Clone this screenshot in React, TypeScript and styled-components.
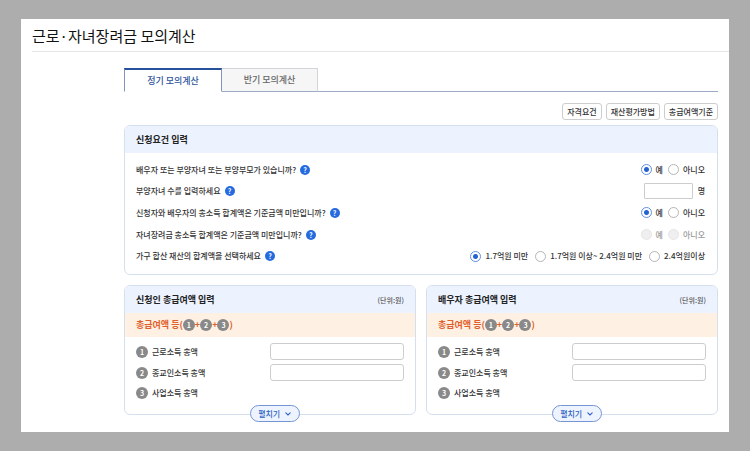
import React, { useState } from 'react';
import styled, { createGlobalStyle } from 'styled-components';

const GlobalStyle = createGlobalStyle`
  *, *::before, *::after { box-sizing: border-box; }
  body {
    margin: 0;
    background: #adadad;
    color: #333;
    font: 500 8px/12px "Noto Sans CJK KR", sans-serif;
  }
  button, input { font: inherit; color: inherit; margin: 0; padding: 0; }
  h1, h2, h3, p { margin: 0; }
`;

const Page = styled.div`
  padding: 19px 21px;
`;

const Sheet = styled.main`
  background: #fff;
  padding-bottom: 17px;
`;

const Title = styled.h1`
  margin-left: 11px;
  padding: 5px 0 4px;
  border-bottom: 1px solid #e6e6e6;
  color: #111;
  font-size: 15px;
  font-weight: 400;
  line-height: 23px;
`;

const Content = styled.div`
  padding: 16px 11px 0 103px;
`;

const TabList = styled.div`
  display: flex;
  border-bottom: 1px solid #9fabc2;
`;

const Tab = styled.button<{ $active: boolean }>`
  height: 24px;
  width: ${(p) => (p.$active ? 98 : 96)}px;
  margin-bottom: -1px;
  border: 1px solid ${(p) => (p.$active ? '#8195c0' : '#d2d4d8')};
  border-top: ${(p) => (p.$active ? '2px solid #27509b' : '1px solid #d2d4d8')};
  border-bottom-color: ${(p) => (p.$active ? '#fff' : '#9fabc2')};
  border-left-width: ${(p) => (p.$active ? 1 : 0)}px;
  background: ${(p) => (p.$active ? '#fff' : '#f6f6f6')};
  color: ${(p) => (p.$active ? '#2f559c' : '#666')};
  font-size: 9px;
`;

const Actions = styled.div`
  display: flex;
  justify-content: flex-end;
  gap: 4px;
  margin: 11px 0 5px;
`;

const ActionButton = styled.button`
  height: 17px;
  padding: 0 4px;
  border: 1px solid #cdcdcd;
  border-radius: 3px;
  background: #fff;
  line-height: 15px;
`;

const Card = styled.section`
  position: relative;
  border: 1px solid #d5e0ee;
  border-radius: 6px;
  background: #fff;
`;

const CardHeader = styled.header`
  display: flex;
  align-items: center;
  justify-content: space-between;
  height: 27px;
  padding: 0 11px;
  border-radius: 5px 5px 0 0;
  background: #ecf2fe;
`;

const CardTitle = styled.h2`
  color: #222;
  font-size: 9px;
  font-weight: 700;
`;

const Unit = styled.span`
  color: #555;
  font-size: 7px;
`;

const Questions = styled.div`
  display: grid;
  grid-auto-rows: 1fr;
  min-height: 121px;
  padding: 6px 12px 7px 11px;
`;

const QuestionRow = styled.div`
  display: flex;
  align-items: center;
  justify-content: space-between;
`;

const Question = styled.div`
  display: flex;
  align-items: center;
  gap: 4px;
`;

const HelpButton = styled.button`
  width: 10px;
  height: 10px;
  border: 0;
  border-radius: 50%;
  background: #256be0;
  color: #fff;
  font-size: 7px;
  font-weight: 700;
  line-height: 10px;
`;

const Options = styled.div<{ $wide?: boolean }>`
  display: flex;
  align-items: center;
  gap: ${(p) => (p.$wide ? 7 : 5)}px;
`;

const Option = styled.label<{ $disabled?: boolean }>`
  display: flex;
  align-items: center;
  gap: 4px;
  color: ${(p) => (p.$disabled ? '#999' : '#333')};
`;

const Radio = styled.input`
  appearance: none;
  width: 11px;
  height: 11px;
  border: 1px solid #b5b5b5;
  border-radius: 50%;
  background: #fff;

  &:checked {
    border-color: #5f90e2;
    background: radial-gradient(circle, #2563d0 0 2px, #fff 3px);
  }

  &:disabled {
    border-color: #e6e6e6;
    background: #efefef;
  }
`;

const TextInput = styled.input<{ $small?: boolean }>`
  width: ${(p) => (p.$small ? '49px' : '50%')};
  height: ${(p) => (p.$small ? 16 : 17)}px;
  padding: 0 4px;
  border: 1px solid #cdcdcd;
  border-radius: ${(p) => (p.$small ? 1 : 3)}px;
  background: #fff;
`;

const IncomeGrid = styled.div`
  display: grid;
  grid-template-columns: 1fr 1fr;
  gap: 10px;
  margin-top: 10px;
`;

const TotalBar = styled.h3`
  display: flex;
  align-items: center;
  height: 24px;
  padding: 0 11px;
  background: #fff0e4;
  color: #e0602b;
  font-size: 9px;
  font-weight: 700;
`;

const NumberBadge = styled.span`
  display: inline-flex;
  align-items: center;
  justify-content: center;
  width: 12px;
  height: 12px;
  border-radius: 50%;
  background: #898989;
  color: #fff;
  font-size: 7px;
  font-weight: 700;
  line-height: 12px;
`;

const IncomeRows = styled.div`
  display: grid;
  gap: 4px;
  padding: 6px 11px 14px;
`;

const IncomeRow = styled.div`
  display: flex;
  align-items: center;
  justify-content: space-between;
  min-height: 15px;
`;

const IncomeLabel = styled.label`
  display: flex;
  align-items: center;
  gap: 4px;
`;

const ExpandButton = styled.button`
  position: absolute;
  bottom: -8px;
  left: 43%;
  display: flex;
  align-items: center;
  justify-content: center;
  gap: 5px;
  width: 50px;
  height: 17px;
  border: 1px solid #7595d2;
  border-radius: 9px;
  background: #edf3ff;
  color: #2f62c4;
`;

const Chevron = () => (
  <svg width="6" height="6" viewBox="0 0 6 6" fill="none" aria-hidden="true">
    <path d="M0.8 1.8 3 4l2.2-2.2" stroke="currentColor" strokeWidth="1.1" strokeLinecap="round" />
  </svg>
);

const Help = () => <HelpButton type="button" aria-label="도움말">?</HelpButton>;

type RadioGroupProps = { name: string; label: string; options: string[]; disabled?: boolean };

function RadioGroup({ name, label, options, disabled }: RadioGroupProps) {
  const [value, setValue] = useState(disabled ? '' : options[0]);
  return (
    <Options role="radiogroup" aria-label={label} $wide={options.length > 2}>
      {options.map((option) => (
        <Option key={option} $disabled={disabled}>
          <Radio
            type="radio"
            name={name}
            disabled={disabled}
            checked={value === option}
            onChange={() => setValue(option)}
          />
          {option}
        </Option>
      ))}
    </Options>
  );
}

const yesNo = ['예', '아니오'];
const assets = ['1.7억원 미만', '1.7억원 이상~ 2.4억원 미만', '2.4억원이상'];
const incomes = [
  { label: '근로소득 총액', input: true },
  { label: '종교인소득 총액', input: true },
  { label: '사업소득 총액', input: false },
];

type RadioQuestionProps = { name: string; text: string; options: string[]; disabled?: boolean };

function RadioQuestion({ name, text, options, disabled }: RadioQuestionProps) {
  return (
    <QuestionRow>
      <Question>{text}<Help /></Question>
      <RadioGroup name={name} label={text} options={options} disabled={disabled} />
    </QuestionRow>
  );
}

function IncomeCard({ id, title }: { id: string; title: string }) {
  return (
    <Card>
      <CardHeader>
        <CardTitle>{title}</CardTitle>
        <Unit>(단위:원)</Unit>
      </CardHeader>
      <TotalBar>
        총급여액 등(<NumberBadge>1</NumberBadge>+<NumberBadge>2</NumberBadge>+<NumberBadge>3</NumberBadge>)
      </TotalBar>
      <IncomeRows>
        {incomes.map((income, i) => (
          <IncomeRow key={income.label}>
            <IncomeLabel htmlFor={income.input ? `${id}-${i}` : undefined}>
              <NumberBadge>{i + 1}</NumberBadge>
              {income.label}
            </IncomeLabel>
            {income.input && <TextInput id={`${id}-${i}`} type="text" />}
          </IncomeRow>
        ))}
      </IncomeRows>
      <ExpandButton type="button">펼치기<Chevron /></ExpandButton>
    </Card>
  );
}

export default function App() {
  const [tab, setTab] = useState(0);
  return (
    <Page>
      <GlobalStyle />
      <Sheet>
        <Title>근로·자녀장려금 모의계산</Title>
        <Content>
          <TabList role="tablist">
            {['정기 모의계산', '반기 모의계산'].map((name, i) => (
              <Tab
                key={name}
                type="button"
                role="tab"
                aria-selected={tab === i}
                $active={tab === i}
                onClick={() => setTab(i)}
              >
                {name}
              </Tab>
            ))}
          </TabList>
          <Actions>
            <ActionButton type="button">자격요건</ActionButton>
            <ActionButton type="button">재산평가방법</ActionButton>
            <ActionButton type="button">총급여액기준</ActionButton>
          </Actions>
          <Card>
            <CardHeader>
              <CardTitle>신청요건 입력</CardTitle>
            </CardHeader>
            <Questions>
              <RadioQuestion name="family" text="배우자 또는 부양자녀 또는 부양부모가 있습니까?" options={yesNo} />
              <QuestionRow>
                <Question>
                  <label htmlFor="children">부양자녀 수를 입력하세요</label>
                  <Help />
                </Question>
                <Options>
                  <TextInput id="children" type="text" inputMode="numeric" $small />
                  명
                </Options>
              </QuestionRow>
              <RadioQuestion name="income" text="신청자와 배우자의 총소득 합계액은 기준금액 미만입니까?" options={yesNo} />
              <RadioQuestion name="childIncome" text="자녀장려금 총소득 합계액은 기준금액 미만입니까?" options={yesNo} disabled />
              <RadioQuestion name="assets" text="가구 합산 재산의 합계액을 선택하세요" options={assets} />
            </Questions>
          </Card>
          <IncomeGrid>
            <IncomeCard id="applicant" title="신청인 총급여액 입력" />
            <IncomeCard id="spouse" title="배우자 총급여액 입력" />
          </IncomeGrid>
        </Content>
      </Sheet>
    </Page>
  );
}
